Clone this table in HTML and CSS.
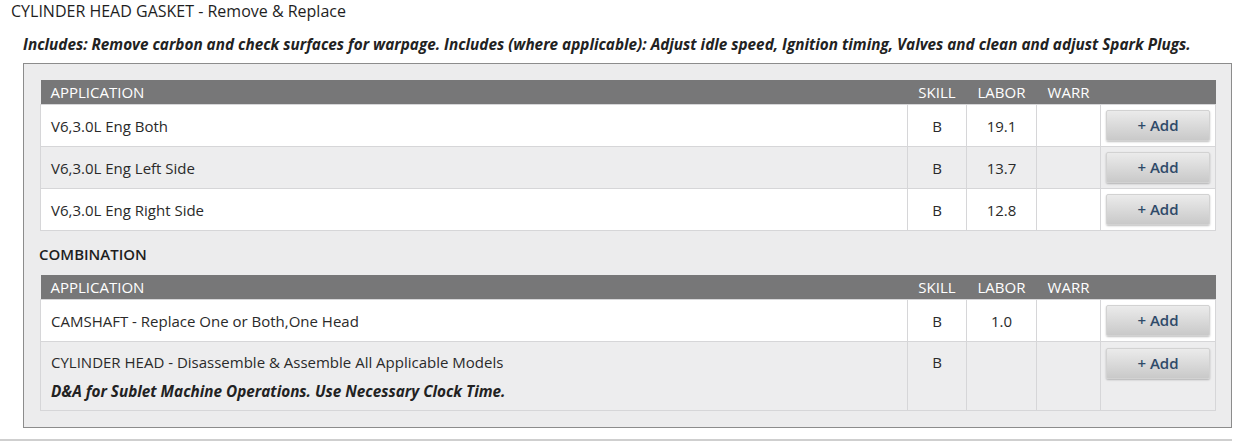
FILE: index.html
```html
<!DOCTYPE html>
<html>
<head>
<meta charset="utf-8">
<link rel="stylesheet" href="styles.css">
</head>
<body>
<div class="page">
  <div class="title">CYLINDER HEAD GASKET - Remove &amp; Replace</div>
  <div class="includes">Includes: Remove carbon and check surfaces for warpage. Includes (where applicable): Adjust idle speed, Ignition timing, Valves and clean and adjust Spark Plugs.</div>
  <div class="box">
    <table class="ops">
      <colgroup>
        <col class="c-app"><col class="c-skill"><col class="c-labor"><col class="c-warr"><col class="c-add">
      </colgroup>
      <thead>
        <tr><th class="app">APPLICATION</th><th>SKILL</th><th>LABOR</th><th>WARR</th><th></th></tr>
      </thead>
      <tbody>
        <tr><td class="app">V6,3.0L Eng Both</td><td>B</td><td>19.1</td><td></td><td class="add"><button class="btn">+ Add</button></td></tr>
        <tr><td class="app">V6,3.0L Eng Left Side</td><td>B</td><td>13.7</td><td></td><td class="add"><button class="btn">+ Add</button></td></tr>
        <tr><td class="app">V6,3.0L Eng Right Side</td><td>B</td><td>12.8</td><td></td><td class="add"><button class="btn">+ Add</button></td></tr>
      </tbody>
    </table>
    <div class="section">COMBINATION</div>
    <table class="ops">
      <colgroup>
        <col class="c-app"><col class="c-skill"><col class="c-labor"><col class="c-warr"><col class="c-add">
      </colgroup>
      <thead>
        <tr><th class="app">APPLICATION</th><th>SKILL</th><th>LABOR</th><th>WARR</th><th></th></tr>
      </thead>
      <tbody>
        <tr><td class="app">CAMSHAFT - Replace One or Both,One Head</td><td>B</td><td>1.0</td><td></td><td class="add"><button class="btn">+ Add</button></td></tr>
        <tr class="tall"><td class="app">CYLINDER HEAD - Disassemble &amp; Assemble All Applicable Models<div class="note">D&amp;A for Sublet Machine Operations. Use Necessary Clock Time.</div></td><td>B</td><td></td><td></td><td class="add"><button class="btn">+ Add</button></td></tr>
      </tbody>
    </table>
  </div>
  <div class="rule"></div>
</div>
</body>
</html>
```

FILE: styles.css
```css
html, body {
  margin: 0;
  padding: 0;
  background: #ffffff;
}
body {
  font-family: "Open Sans", "Noto Sans", sans-serif;
  color: #222222;
  font-size: 15px;
}
.page {
  width: 1232px;
}
.title {
  padding: 1px 0 0 11px;
  line-height: 20px;
  font-size: 16px;
  color: #1e1e1e;
}
.includes {
  margin: 13px 0 0 23px;
  line-height: 20px;
  font-size: 15.3px;
  font-weight: 700;
  font-style: italic;
  color: #222222;
  white-space: nowrap;
}
.box {
  margin: 9px 0 0 23px;
  border: 1px solid #8c8c8c;
  background: #ececed;
  padding: 16px;
}
.ops {
  width: 100%;
  border-collapse: collapse;
  table-layout: fixed;
}
.c-app { width: 867px; }
.c-skill { width: 59px; }
.c-labor { width: 70px; }
.c-warr { width: 64px; }
.c-add { width: 115px; }
.ops th {
  background: #777778;
  color: #ffffff;
  font-weight: 400;
  font-size: 15px;
  height: 24px;
  padding: 0;
  text-align: center;
  line-height: 24px;
}
.ops th.app {
  text-align: left;
  padding-left: 10px;
}
.ops td {
  border: 1px solid #d6d6d8;
  height: 41px;
  padding: 0;
  text-align: center;
  vertical-align: middle;
  font-size: 15px;
  color: #2a2a2a;
}
.ops tbody tr:nth-child(odd) td { background: #ffffff; }
.ops tbody tr:nth-child(even) td { background: #ededee; }
.ops td.app {
  text-align: left;
  padding-left: 10px;
}
.ops td.add {
  text-align: left;
  padding-left: 5px;
}
.btn {
  display: block;
  width: 104px;
  height: 31px;
  border: 1px solid #d2d2d2;
  border-radius: 2px;
  background: linear-gradient(#ebebeb, #c9c9c9);
  box-shadow: 0 1px 2px rgba(0,0,0,0.25);
  color: #2f4a69;
  font-family: "Open Sans", "Noto Sans", sans-serif;
  font-size: 15px;
  font-weight: 600;
  padding: 0;
  line-height: 27px;
}
.ops tr.tall td {
  height: 58px;
  vertical-align: top;
  padding-top: 10px;
}
.ops tr.tall td.add { padding-top: 6px; }
.note {
  margin-top: 9px;
  font-weight: 700;
  font-style: italic;
  font-size: 15.3px;
  color: #222222;
}
.section {
  margin: 13px 0 11px -1px;
  line-height: 20px;
  font-size: 15px;
  font-weight: 600;
  color: #1e1e1e;
}
.rule {
  margin-top: 11px;
  height: 2px;
  background: #cfcfcf;
}
```
